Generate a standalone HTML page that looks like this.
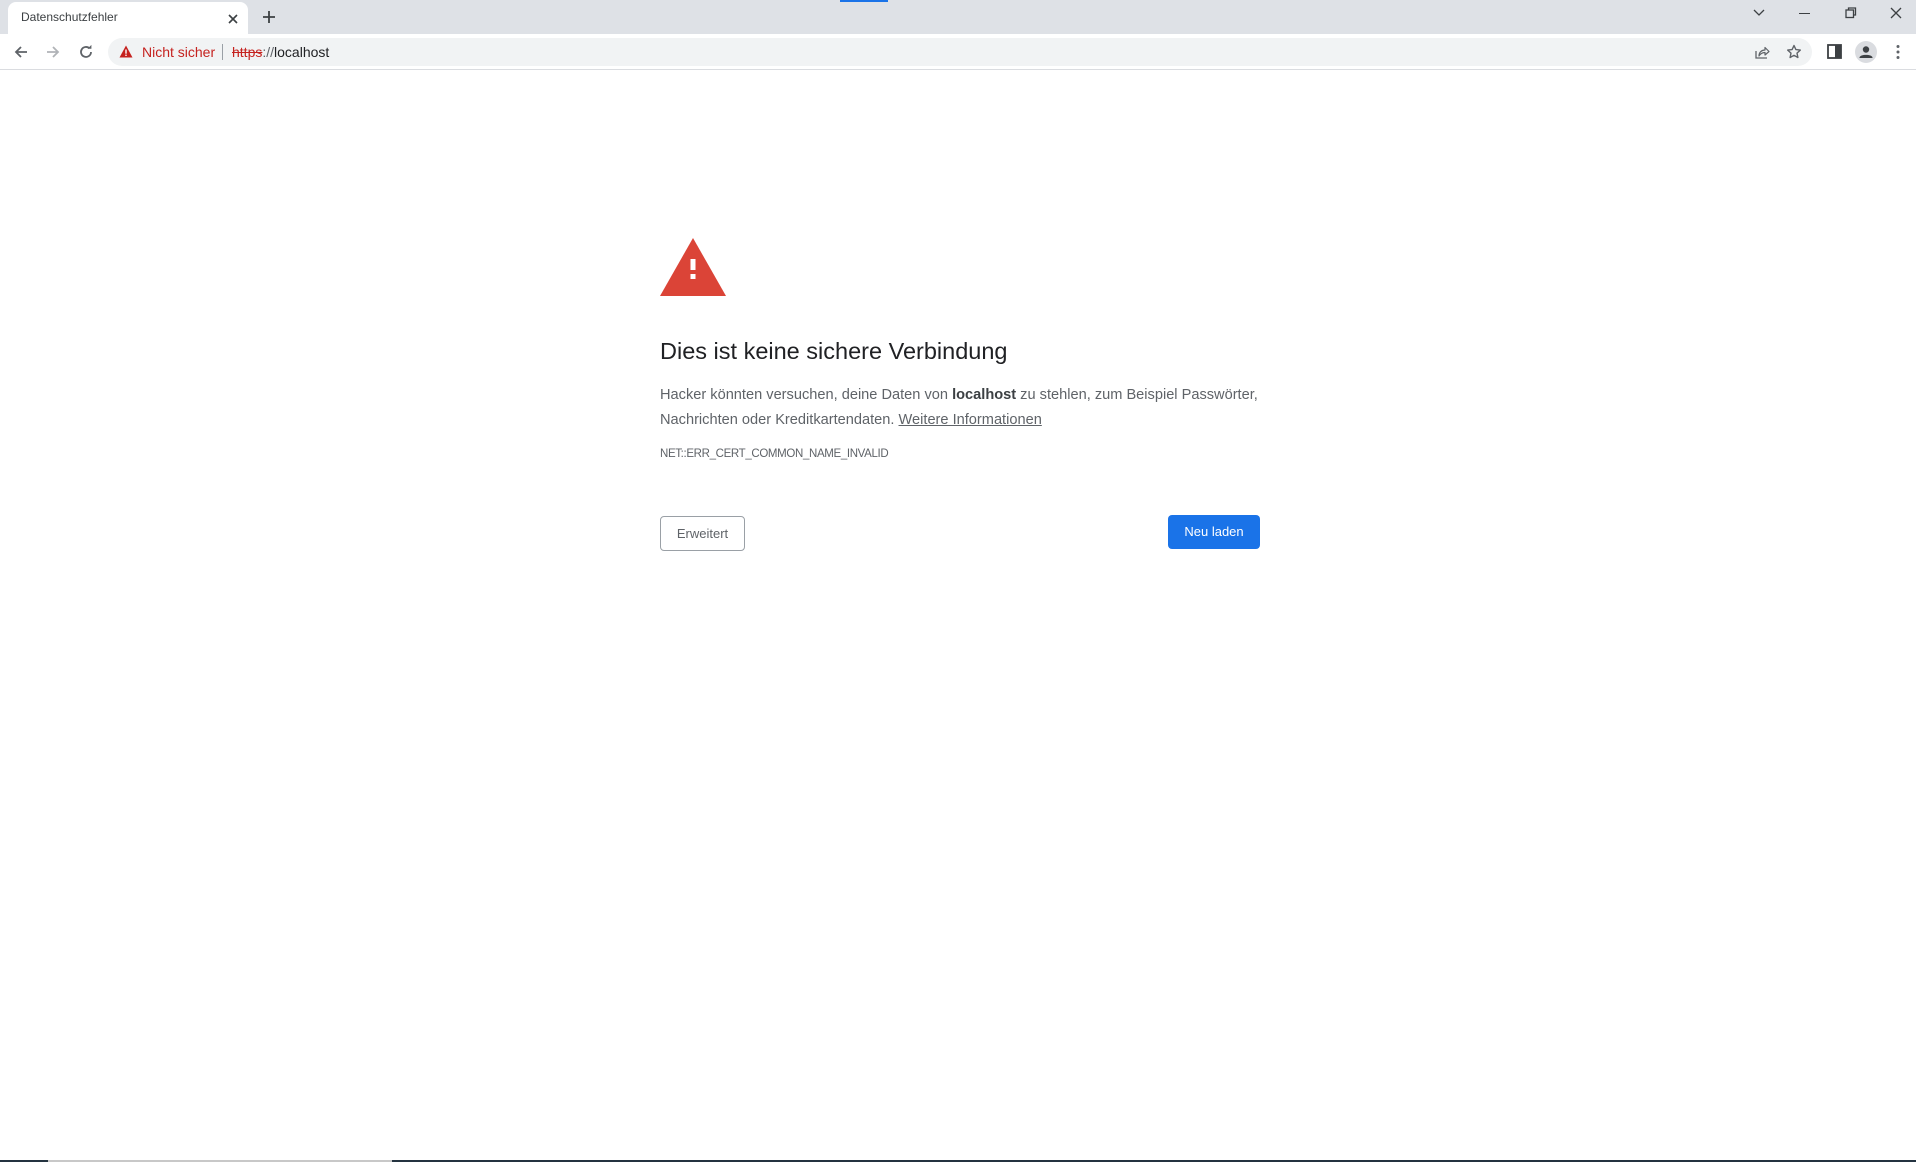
<!DOCTYPE html>
<html><head><meta charset="utf-8"><style>
*{margin:0;padding:0;box-sizing:border-box}
body{width:1916px;height:1162px;background:#fff;font-family:"Liberation Sans",sans-serif;position:relative;overflow:hidden}
.abs{position:absolute}
#strip{left:0;top:0;width:1916px;height:34px;background:#dee1e6}
#tab{left:8px;top:2px;width:240px;height:34px;background:#fff;border-radius:8px 8px 0 0}
#tab span{position:absolute;left:13px;top:8px;font-size:12px;color:#3c4043}
#toolbar{left:0;top:34px;width:1916px;height:36px;background:#fff;border-bottom:1px solid #dadce0}
#omni{left:108px;top:38px;width:1704px;height:28px;background:#f1f3f4;border-radius:14px}
.t{font-size:14px;color:#202124}
p.body{font-size:14.6px;color:#5f6368;line-height:24.5px;white-space:nowrap}
</style></head><body>
<div id="strip" class="abs"></div>
<div class="abs" style="left:840px;top:0;width:48px;height:2px;background:#1a73e8"></div>
<div id="tab" class="abs"><span>Datenschutzfehler</span>
<svg class="abs" style="left:219px;top:11px" width="12" height="12" viewBox="0 0 12 12"><path d="M2 2L10 10M10 2L2 10" stroke="#3c4043" stroke-width="1.6"/></svg></div>
<svg class="abs" style="left:262px;top:10px" width="14" height="14" viewBox="0 0 14 14"><path d="M7 1V13M1 7H13" stroke="#3c4043" stroke-width="1.8"/></svg>
<svg class="abs" style="left:1752px;top:8px" width="14" height="10" viewBox="0 0 14 10"><path d="M2 2L7 7L12 2" stroke="#3c4043" stroke-width="1.3" fill="none"/></svg>
<div class="abs" style="left:1799px;top:13px;width:11px;height:1.3px;background:#3c4043"></div>
<svg class="abs" style="left:1845px;top:7px" width="12" height="12" viewBox="0 0 12 12"><rect x="1" y="3" width="7.5" height="7.5" stroke="#3c4043" fill="none" stroke-width="1.3"/><path d="M3.5 3V1H10.5V8H8.5" stroke="#3c4043" fill="none" stroke-width="1.3"/></svg>
<svg class="abs" style="left:1890px;top:7px" width="12" height="12" viewBox="0 0 12 12"><path d="M1 1L11 11M11 1L1 11" stroke="#3c4043" stroke-width="1.3"/></svg>
<div id="toolbar" class="abs"></div>
<svg class="abs" style="left:13px;top:44px" width="16" height="16" viewBox="0 0 16 16"><path d="M14 8H3M8 3L3 8L8 13" stroke="#5f6368" stroke-width="1.8" fill="none"/></svg>
<svg class="abs" style="left:45px;top:44px" width="16" height="16" viewBox="0 0 16 16"><path d="M2 8H13M8 3L13 8L8 13" stroke="#b0b3b7" stroke-width="1.8" fill="none"/></svg>
<svg class="abs" style="left:78px;top:44px" width="16" height="16" viewBox="0 0 16 16"><path d="M13 8A5 5 0 1 1 11.5 4.4" stroke="#5f6368" stroke-width="1.8" fill="none"/><path d="M9.5 4.8H13.4V0.9Z" fill="#5f6368"/></svg>
<div id="omni" class="abs"></div>
<svg class="abs" style="left:119px;top:45px" width="14" height="13" viewBox="0 0 14 13"><path d="M7 0.5L13.5 12.5H0.5Z" fill="#c5221f"/><rect x="6.3" y="4.5" width="1.4" height="4.2" fill="#fff"/><rect x="6.3" y="9.6" width="1.4" height="1.4" fill="#fff"/></svg>
<div class="abs t" style="left:142px;top:44px;color:#c5221f">Nicht sicher</div>
<div class="abs" style="left:222px;top:44px;width:1px;height:16px;background:#9aa0a6"></div>
<div class="abs t" style="left:232px;top:44px"><span style="color:#c5221f;text-decoration:line-through">https</span><span style="color:#5f6368">://</span>localhost</div>
<svg class="abs" style="left:1754px;top:44px" width="16" height="16" viewBox="0 0 16 16"><path d="M2 7V14H13" stroke="#5f6368" stroke-width="1.3" fill="none"/><path d="M5 12C5 8 8 6 11 6V3.5L15 7.5L11 11V8.5C8.5 8.5 6.5 9.5 5 12Z" stroke="#5f6368" stroke-width="1.2" fill="none" stroke-linejoin="round"/></svg>
<svg class="abs" style="left:1786px;top:44px" width="16" height="16" viewBox="0 0 16 16"><path d="M8 1.5L9.9 5.6L14.3 6.1L11 9.1L11.9 13.5L8 11.3L4.1 13.5L5 9.1L1.7 6.1L6.1 5.6Z" stroke="#5f6368" stroke-width="1.4" fill="none" stroke-linejoin="round"/></svg>
<svg class="abs" style="left:1827px;top:44px" width="15" height="15" viewBox="0 0 15 15"><rect x="1" y="1" width="13" height="13" stroke="#3c4043" stroke-width="1.8" fill="none"/><rect x="8" y="1" width="6" height="13" fill="#3c4043"/></svg>
<svg class="abs" style="left:1855px;top:41px" width="22" height="22" viewBox="0 0 22 22"><circle cx="11" cy="11" r="11" fill="#dadce0"/><circle cx="11" cy="8.5" r="3.2" fill="#3c4043"/><path d="M4.5 16.5C5 13 17 13 17.5 16.5V17H4.5Z" fill="#3c4043"/></svg>
<svg class="abs" style="left:1896px;top:44px" width="4" height="16" viewBox="0 0 4 16"><circle cx="2" cy="2.5" r="1.5" fill="#5f6368"/><circle cx="2" cy="8" r="1.5" fill="#5f6368"/><circle cx="2" cy="13.5" r="1.5" fill="#5f6368"/></svg>

<svg class="abs" style="left:660px;top:238px" width="66" height="58" viewBox="0 0 66 58"><path d="M33 0L66 58H0Z" fill="#db4437"/><rect x="30.5" y="21" width="5" height="11" fill="#fff"/><rect x="30.5" y="36" width="5" height="5" fill="#fff"/></svg>
<div class="abs" style="left:660px;top:338px;font-size:23.5px;color:#202124;white-space:nowrap">Dies ist keine sichere Verbindung</div>
<p class="abs body" style="left:660px;top:383px">Hacker könnten versuchen, deine Daten von <b style="color:#3c4043">localhost</b> zu stehlen, zum Beispiel Passwörter,<br>Nachrichten oder Kreditkartendaten. <u>Weitere Informationen</u></p>
<div class="abs" style="left:660px;top:448px;font-size:11.5px;color:#5f6368;letter-spacing:-0.35px">NET::ERR_CERT_COMMON_NAME_INVALID</div>
<div class="abs" style="left:660px;top:516px;width:85px;height:35px;border:1px solid #9aa0a6;border-radius:4px;font-size:13px;color:#5f6368;text-align:center;line-height:33px">Erweitert</div>
<div class="abs" style="left:1168px;top:515px;width:92px;height:34px;background:#1a73e8;border-radius:4px;font-size:13px;color:#fff;text-align:center;line-height:34px">Neu laden</div>
<div class="abs" style="left:0;top:1160px;width:1916px;height:2px;background:#243340"></div>
<div class="abs" style="left:48px;top:1160px;width:344px;height:2px;background:#c8c8c8"></div>
</body></html>
